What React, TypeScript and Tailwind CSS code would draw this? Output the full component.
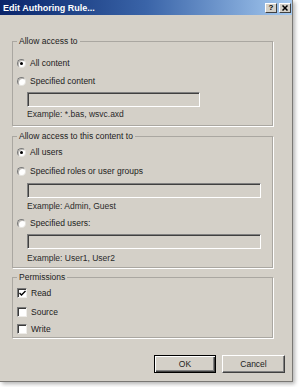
import React from "react";

const font = { fontFamily: '"Liberation Sans", Arial, sans-serif' };

function Radio({ checked, label }: { checked?: boolean; label: string }) {
  return (
    <div className="flex items-center h-[18px] gap-[4px]">
      <span className="w-[9px] h-[9px] rounded-full bg-white border border-t-[#7a7a7a] border-l-[#7a7a7a] border-r-[#e4e2dd] border-b-[#e4e2dd] shadow-[inset_1px_1px_0_#b9b6b0] flex items-center justify-center">
        {checked && <span className="w-[3px] h-[3px] rounded-full bg-black" />}
      </span>
      <span className="text-[8.5px] leading-[10px] text-[#1c1c1c]">{label}</span>
    </div>
  );
}

function Check({ checked, label, h }: { checked?: boolean; label: string; h: string }) {
  return (
    <div className={`flex items-center gap-[4px] ${h}`}>
      <span className="w-[10px] h-[10px] bg-white border border-t-[#7a7a7a] border-l-[#7a7a7a] border-r-[#eeece8] border-b-[#eeece8] shadow-[inset_1px_1px_0_#3a3a3a] flex items-center justify-center">
        {checked && (
          <svg width="7" height="7" viewBox="0 0 7 7">
            <path d="M0.5 3 L2.5 5 L6.5 1" stroke="#000" strokeWidth="1.4" fill="none" />
          </svg>
        )}
      </span>
      <span className="text-[8.5px] leading-[10px] text-[#1c1c1c]">{label}</span>
    </div>
  );
}

function Field({ w }: { w: string }) {
  return (
    <div
      className={`${w} h-[15px] ml-[10px] bg-[#d4d0c8] border border-t-[#808080] border-l-[#808080] border-r-white border-b-white shadow-[inset_1px_1px_0_#404040]`}
    />
  );
}

function Example({ text, mt }: { text: string; mt: string }) {
  return (
    <div className={`${mt} ml-[10px] text-[8.5px] leading-[11px] text-[#2a2a2a]`}>{text}</div>
  );
}

function Group({ title, className, children }: { title: string; className: string; children: React.ReactNode }) {
  return (
    <fieldset
      className={`w-[261px] px-[4px] border border-[#aaa7a1] shadow-[1px_1px_0_#fff] ${className}`}
    >
      <legend className="px-[2px] text-[8.5px] leading-[10px] text-[#1c1c1c]">{title}</legend>
      {children}
    </fieldset>
  );
}

export default function App() {
  return (
    <div className="w-[300px] h-[387px] bg-white" style={font}>
      <div className="w-[293px] h-[382px] flex flex-col bg-[#d4d0c8] border-r border-b border-[#7a7874] shadow-[2px_2px_4px_rgba(0,0,0,0.3)]">
        {/* title bar */}
        <div className="h-[15px] flex items-center justify-between pl-[3px] pr-[1px] bg-gradient-to-r from-[#0a246a] via-[#3a64a8] to-[#a6caf0]">
          <span className="text-white font-bold text-[9px] leading-[10px]">Edit Authoring Rule...</span>
          <div className="flex gap-[2px]">
            <span className="w-[12px] h-[10px] bg-[#d4d0c8] border border-t-white border-l-white border-r-[#404040] border-b-[#404040] flex items-center justify-center text-[8px] font-bold leading-none text-black">
              ?
            </span>
            <span className="w-[12px] h-[10px] bg-[#d4d0c8] border border-t-white border-l-white border-r-[#404040] border-b-[#404040] flex items-center justify-center">
              <svg width="6" height="6" viewBox="0 0 6 6">
                <path d="M0.5 0.5 L5.5 5.5 M5.5 0.5 L0.5 5.5" stroke="#000" strokeWidth="1.5" />
              </svg>
            </span>
          </div>
        </div>

        <div className="flex flex-col pl-[12px] pr-[7px] pt-[21px]">
          <Group title="Allow access to" className="pt-[8px] pb-[5px]">
            <Radio checked label="All content" />
            <Radio label="Specified content" />
            <div className="mt-[2px]">
              <Field w="w-[173px]" />
            </div>
            <Example mt="mt-[2px]" text="Example: *.bas, wsvc.axd" />
          </Group>

          <Group title="Allow access to this content to" className="mt-[5px] pt-[2px] pb-[3px]">
            <Radio checked label="All users" />
            <div className="mt-[1px]">
              <Radio label="Specified roles or user groups" />
            </div>
            <div className="mt-[3px]">
              <Field w="w-[234px]" />
            </div>
            <Example mt="mt-[3px]" text="Example: Admin, Guest" />
            <div className="mt-[2px]">
              <Radio label="Specified users:" />
            </div>
            <div className="mt-[2px]">
              <Field w="w-[234px]" />
            </div>
            <Example mt="mt-[4px]" text="Example: User1, User2" />
          </Group>

          <Group title="Permissions" className="mt-[4px] pt-[3px] pb-0">
            <Check checked label="Read" h="h-[16px]" />
            <div className="mt-[3px]">
              <Check label="Source" h="h-[16px]" />
            </div>
            <div className="mt-[1px]">
              <Check label="Write" h="h-[16px]" />
            </div>
          </Group>

          <div className="mt-[17px] flex justify-end gap-[6px]">
            <button className="w-[62px] h-[18px] bg-[#d4d0c8] border border-black shadow-[inset_1px_1px_0_#fff,inset_-1px_-1px_0_#404040,inset_-2px_-2px_0_#808080] text-[8.5px] leading-none text-[#222]">
              OK
            </button>
            <button className="w-[63px] h-[18px] bg-[#d4d0c8] border border-t-white border-l-white border-r-[#404040] border-b-[#404040] shadow-[inset_-1px_-1px_0_#808080] text-[8.5px] leading-none text-[#222]">
              Cancel
            </button>
          </div>
        </div>
      </div>
    </div>
  );
}
